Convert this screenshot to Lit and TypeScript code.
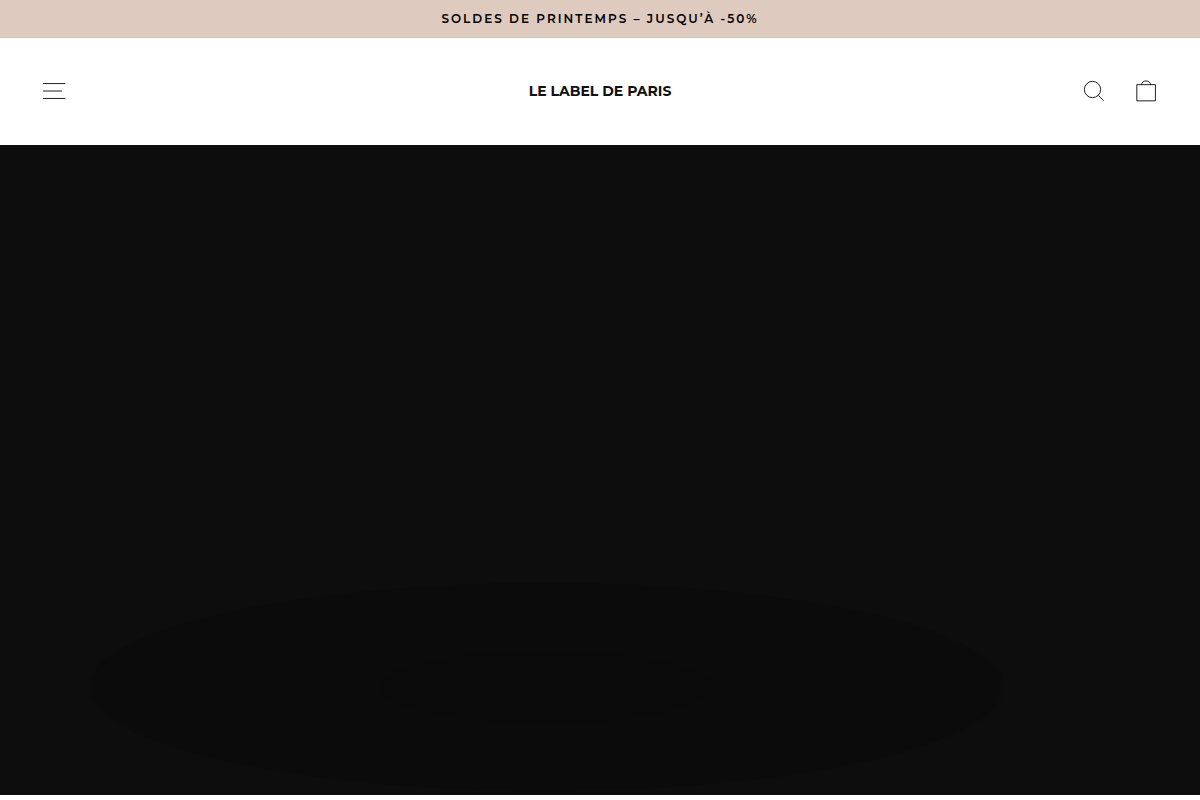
import { LitElement, html, css } from "lit";
import { customElement } from "lit/decorators.js";

@customElement("app-root")
export class AppRoot extends LitElement {
  static styles = css`
    :host {
      display: block;
      background: #fff;
      color: #000;
      font-family: Montserrat, Inter, "Open Sans", sans-serif;
    }
    .announcement {
      padding: 10px 20px 9px;
      background: #dfcabf;
      border-bottom: 1px solid #cfc4bb;
      text-align: center;
      font-size: 12px;
      font-weight: 600;
      line-height: 18px;
      letter-spacing: 2px;
      text-transform: uppercase;
    }
    .header {
      display: grid;
      grid-template-columns: 1fr auto 1fr;
      align-items: center;
      padding: 31px 30px 32px;
    }
    .group {
      display: flex;
      gap: 4px;
    }
    .end {
      justify-content: flex-end;
    }
    .icon-button {
      display: flex;
      padding: 8px 10px;
      border: 0;
      background: none;
      color: inherit;
      text-decoration: none;
      cursor: pointer;
    }
    .icon {
      width: 28px;
      height: 28px;
      fill: none;
      stroke: currentColor;
      stroke-width: 2;
    }
    .logo {
      color: #111;
      font-size: 14px;
      font-weight: 700;
      line-height: 20px;
      text-decoration: none;
      white-space: nowrap;
    }
    .hero {
      height: 650px;
      background:
        radial-gradient(ellipse 169px 37px at 45.5% 542px, #0a0a0a 99%, transparent),
        radial-gradient(ellipse 460px 105px at 45.5% 542px, #0b0b0b 99%, transparent),
        #0d0d0d;
    }
  `;

  render() {
    return html`
      <div class="announcement">Soldes de printemps – jusqu’à -50%</div>
      <header class="header">
        <div class="group">
          <button class="icon-button" type="button" aria-label="Navigation">
            <svg class="icon" viewBox="0 0 64 64" aria-hidden="true">
              <path d="M7 15h51M7 32h43M7 49h51" />
            </svg>
          </button>
        </div>
        <a class="logo" href="#">LE LABEL DE PARIS</a>
        <div class="group end">
          <a class="icon-button" href="#" aria-label="Rechercher">
            <svg class="icon" viewBox="0 0 64 64" aria-hidden="true">
              <path d="M47.16 28.58A18.58 18.58 0 1 1 28.58 10a18.58 18.58 0 0 1 18.58 18.58zM54 54 41.94 42" />
            </svg>
          </a>
          <a class="icon-button" href="#" aria-label="Panier">
            <svg class="icon" viewBox="0 0 64 64" aria-hidden="true">
              <path d="M11 17.5h42.5v37H11zM22 17.5c0-5 4.500-8.500 10.200-8.500s10.200 3.500 10.200 8.500" />
            </svg>
          </a>
        </div>
      </header>
      <main class="hero"></main>
    `;
  }
}
